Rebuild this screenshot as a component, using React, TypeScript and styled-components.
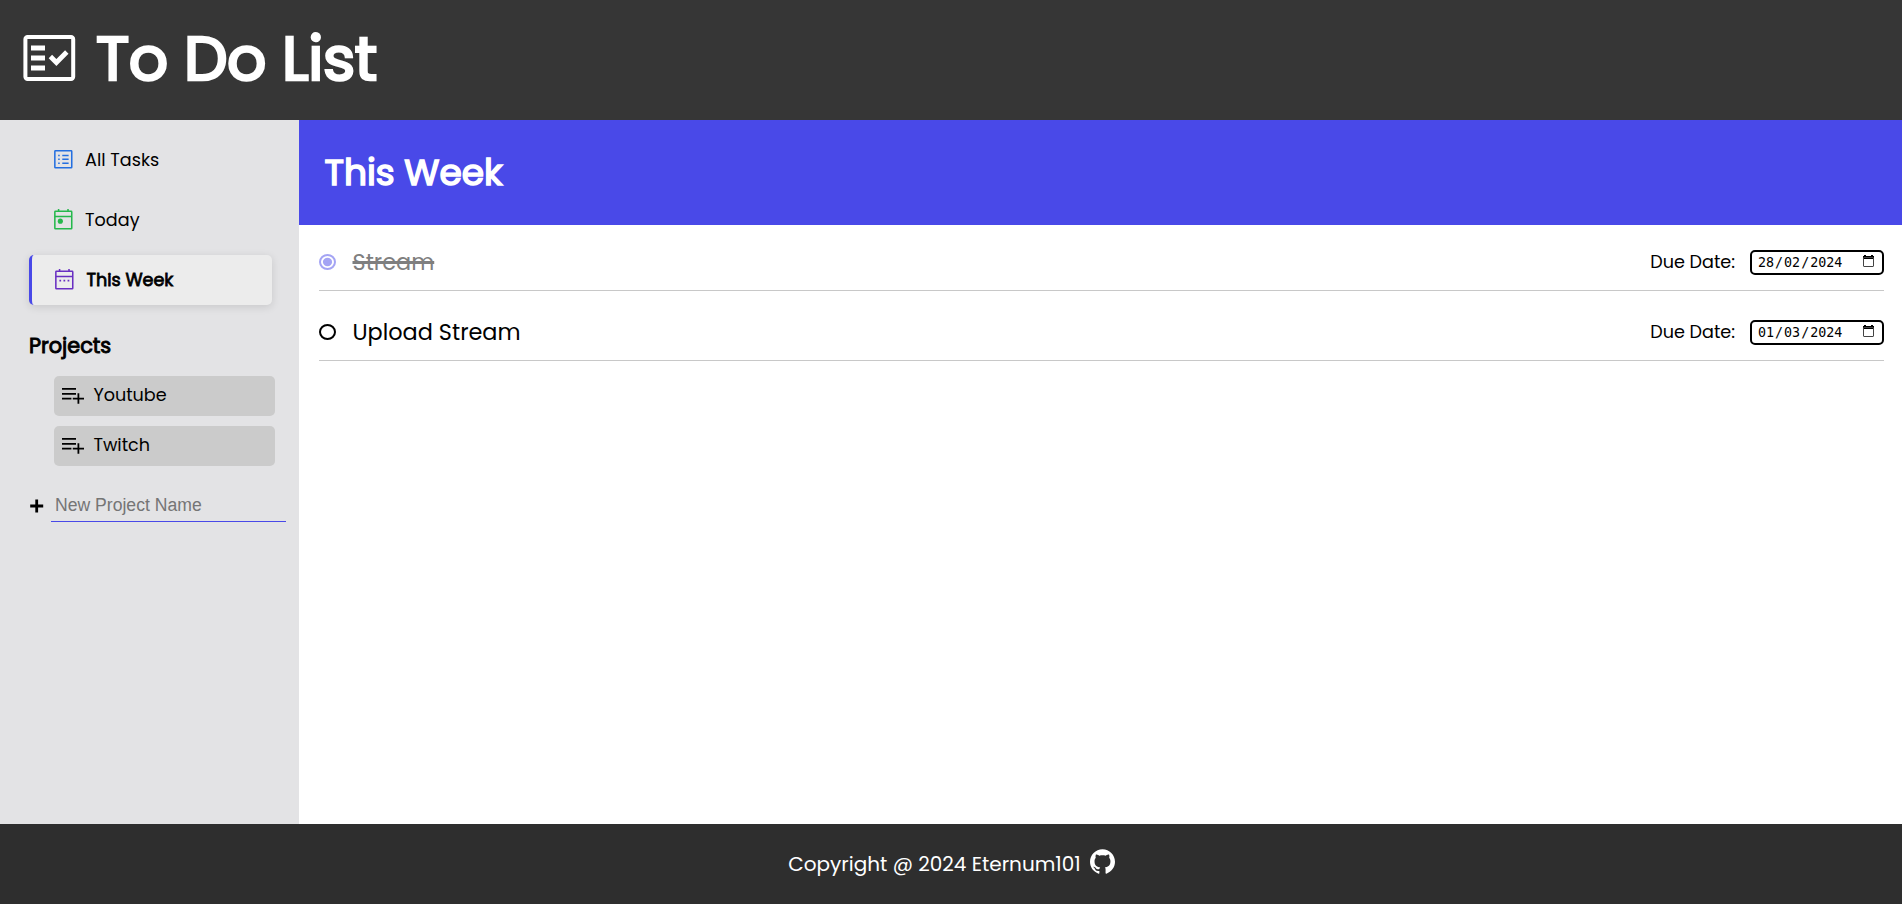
import React from 'react';
import styled, { createGlobalStyle, css } from 'styled-components';
import { SiGithub } from 'react-icons/si';

const GlobalStyle = createGlobalStyle`
  *, *::before, *::after { box-sizing: border-box; }
  body { margin: 0; font-family: 'Poppins', 'Inter', sans-serif; color: #000; }
`;

/* Regular weight thickened by an outline, so the letters keep their regular widths. */
const emboldened = css`
  font-weight: 400;
  -webkit-text-stroke: 0.044em currentColor;
`;

const Page = styled.div`
  display: grid;
  grid-template: 120px 1fr 80px / 299px 1fr;
  height: 904px;
`;

const Header = styled.header`
  grid-column: 1 / -1;
  display: flex;
  align-items: center;
  gap: 19.5px;
  padding: 0 0 4px 23.4px;
  background: #363636;
  color: #fff;
`;

const Title = styled.h1`
  margin: 2px 0 0;
  font-size: 61.6px;
  line-height: 1;
  letter-spacing: -0.4px;
  white-space: nowrap;
  ${emboldened}
`;

const Sidebar = styled.aside`
  display: flex;
  flex-direction: column;
  padding: 15px 13px 0 29px;
  background: #e3e3e5;
`;

const Nav = styled.nav`
  display: flex;
  flex-direction: column;
  gap: 10px;
`;

const NavItem = styled.button<{ $active?: boolean }>`
  display: flex;
  align-items: center;
  gap: 10px;
  width: 243px;
  height: 50px;
  padding: 0 0 0 21.5px;
  border: 0;
  border-radius: 5px;
  background: none;
  font: inherit;
  font-size: 17.6px;
  color: #000;
  svg { margin-top: -2.4px; }
  ${(p) =>
    p.$active &&
    css`
      padding-left: 19.8px;
      border-left: 3px solid #4949e8;
      background: #ececec;
      box-shadow: 0 2px 8px rgba(0, 0, 0, 0.12);
      ${emboldened}
    `}
`;

const SectionTitle = styled.h2`
  margin: 26px 0 15px;
  font-size: 20.8px;
  line-height: 30px;
  ${emboldened}
`;

const ProjectList = styled.div`
  display: flex;
  flex-direction: column;
  gap: 10px;
  margin-left: 25px;
`;

const Project = styled.button`
  display: flex;
  align-items: center;
  gap: 9.4px;
  width: 221px;
  height: 40px;
  padding: 0 0 2px 8px;
  border: 0;
  border-radius: 5px;
  background: #cbcbcb;
  font: inherit;
  font-size: 17.6px;
  color: #000;
`;

const NewProject = styled.form`
  display: flex;
  align-items: center;
  gap: 7px;
  margin-top: 22px;
  padding-left: 1px;
  > svg { margin-top: 2px; }
`;

const ProjectInput = styled.input`
  width: 235px;
  height: 34px;
  padding: 2px 4px 0;
  border: 0;
  border-bottom: 1px solid #4949e8;
  background: none;
  font: 17.6px 'Liberation Sans', sans-serif;
  outline: 0;
  &::placeholder { color: #757575; }
`;

const Main = styled.main`
  background: #fff;
`;

const Banner = styled.div`
  display: flex;
  align-items: center;
  height: 105px;
  padding-left: 25.5px;
  background: #4949e8;
  color: #fff;
`;

const BannerTitle = styled.h2`
  margin: 0;
  font-size: 36px;
  line-height: 54px;
  ${emboldened}
`;

const Tasks = styled.ul`
  margin: 0;
  padding: 0 18px 0 20px;
  list-style: none;
`;

const Task = styled.li`
  display: flex;
  align-items: center;
  height: 70px;
  padding-top: 13px;
  border-bottom: 1px solid #c8c8c8;
  &:first-child { height: 66px; padding-top: 9px; }
`;

const TaskName = styled.span<{ $done?: boolean }>`
  flex: 1;
  margin-left: 15.5px;
  font-size: 22.4px;
  line-height: 34px;
  ${(p) =>
    p.$done &&
    css`
      color: #7f7f7f;
      text-decoration: line-through 3px;
    `}
`;

const DueLabel = styled.span`
  margin-right: 15px;
  font-size: 17.6px;
`;

const DateField = styled.div`
  display: flex;
  align-items: center;
  width: 134px;
  height: 25px;
  padding: 0 8px 0 5px;
  border: 2px solid #000;
  border-radius: 5px;
  font: 13.333px 'DejaVu Sans Mono', monospace;
  svg { margin: -3px 0 0 auto; }
`;

const DatePart = styled.span`
  padding: 0 1px;
`;

const Footer = styled.footer`
  grid-column: 1 / -1;
  display: flex;
  align-items: center;
  justify-content: center;
  gap: 9px;
  padding-left: 1px;
  background: #2e2e2e;
  color: #fff;
  font-size: 20px;
  svg { margin-top: -6px; }
`;

const FactCheckIcon = () => (
  <svg width="53" height="47" viewBox="0 0 53 47" fill="none" stroke="#fff">
    <rect x="2.4" y="2" width="47.8" height="42" rx="2.2" strokeWidth="4" />
    <path d="M8 13h14M8 23h14M8 33h14" strokeWidth="5" />
    <path d="M27.4 21.5l6 6L43.8 17" strokeWidth="4.8" />
  </svg>
);

const ListIcon = () => (
  <svg width="24.6" height="24.6" viewBox="0 0 24 24" fill="none" stroke="#246fe0" strokeWidth="1.5">
    <rect x="3.75" y="3.75" width="16.5" height="16.5" rx="0.6" />
    <path d="M11 8.2h6.2M11 12h6.2M11 15.8h6.2M7 8.2h1.5M7 12h1.5M7 15.8h1.5" />
  </svg>
);

const TodayIcon = () => (
  <svg width="24.6" height="24.6" viewBox="0 0 24 24" fill="none" stroke="#25b84c" strokeWidth="1.5">
    <rect x="3.75" y="4.25" width="16.5" height="17" rx="0.6" />
    <path d="M3.75 9.3h16.5M7.4 2v2.3M16.6 2v2.3" />
    <circle cx="9.1" cy="13.8" r="2.5" fill="#25b84c" stroke="none" />
  </svg>
);

const WeekIcon = () => (
  <svg width="24.6" height="24.6" viewBox="0 0 24 24" fill="none" stroke="#692fc2" strokeWidth="1.5">
    <rect x="3.75" y="4.25" width="16.5" height="17" rx="0.6" />
    <path d="M3.75 9.3h16.5M7.4 2v2.3M16.6 2v2.3M7.2 13.3h1.7M11.2 13.3h1.7M15.2 13.3h1.7" />
  </svg>
);

const PlaylistIcon = () => (
  <svg width="22" height="17" viewBox="0 0 22 17" fill="none" stroke="#000" strokeWidth="1.8">
    <path d="M0 1.8h14M0 6.8h14M0 11.6h9.4M10.8 11.6H22M16.4 6.2v10.6" />
  </svg>
);

const PlusIcon = () => (
  <svg width="14" height="14" viewBox="0 0 14 14" stroke="#000" strokeWidth="2.8">
    <path d="M0.2 7h13M6.7 0.5v13" />
  </svg>
);

const CalendarIcon = () => (
  <svg width="11" height="12" viewBox="0 0 11 12">
    <path d="M0 1h11v3H0zM1 0h2v1H1zM8 0h2v1H8z" fill="#000" />
    <rect x="0.5" y="2.5" width="10" height="9" rx="0.5" fill="none" stroke="#444" />
  </svg>
);

const Radio = ({ checked }: { checked?: boolean }) => {
  const color = checked ? '#a4a4f4' : '#000';
  return (
    <svg width="18" height="16" viewBox="0 0 18 16" fill="none">
      <ellipse cx="8.5" cy="8" rx="7.5" ry="7" stroke={color} strokeWidth="2" />
      {checked && <ellipse cx="8.5" cy="8" rx="4.6" ry="4.2" fill={color} />}
    </svg>
  );
};

const tasks = [
  { name: 'Stream', done: true, date: ['28', '02', '2024'] },
  { name: 'Upload Stream', done: false, date: ['01', '03', '2024'] },
];

export default function App() {
  return (
    <>
      <GlobalStyle />
      <Page>
        <Header>
          <FactCheckIcon />
          <Title>To Do List</Title>
        </Header>
        <Sidebar>
          <Nav>
            <NavItem><ListIcon />All Tasks</NavItem>
            <NavItem><TodayIcon />Today</NavItem>
            <NavItem $active><WeekIcon />This Week</NavItem>
          </Nav>
          <SectionTitle>Projects</SectionTitle>
          <ProjectList>
            <Project><PlaylistIcon />Youtube</Project>
            <Project><PlaylistIcon />Twitch</Project>
          </ProjectList>
          <NewProject>
            <PlusIcon />
            <ProjectInput placeholder="New Project Name" />
          </NewProject>
        </Sidebar>
        <Main>
          <Banner><BannerTitle>This Week</BannerTitle></Banner>
          <Tasks>
            {tasks.map((t) => (
              <Task key={t.name}>
                <Radio checked={t.done} />
                <TaskName $done={t.done}><span>{t.name}</span></TaskName>
                <DueLabel>Due Date:</DueLabel>
                <DateField>
                  <DatePart>{t.date[0]}</DatePart>/<DatePart>{t.date[1]}</DatePart>/<DatePart>{t.date[2]}</DatePart>
                  <CalendarIcon />
                </DateField>
              </Task>
            ))}
          </Tasks>
        </Main>
        <Footer>
          Copyright @ 2024 Eternum101
          <SiGithub size={25} />
        </Footer>
      </Page>
    </>
  );
}
